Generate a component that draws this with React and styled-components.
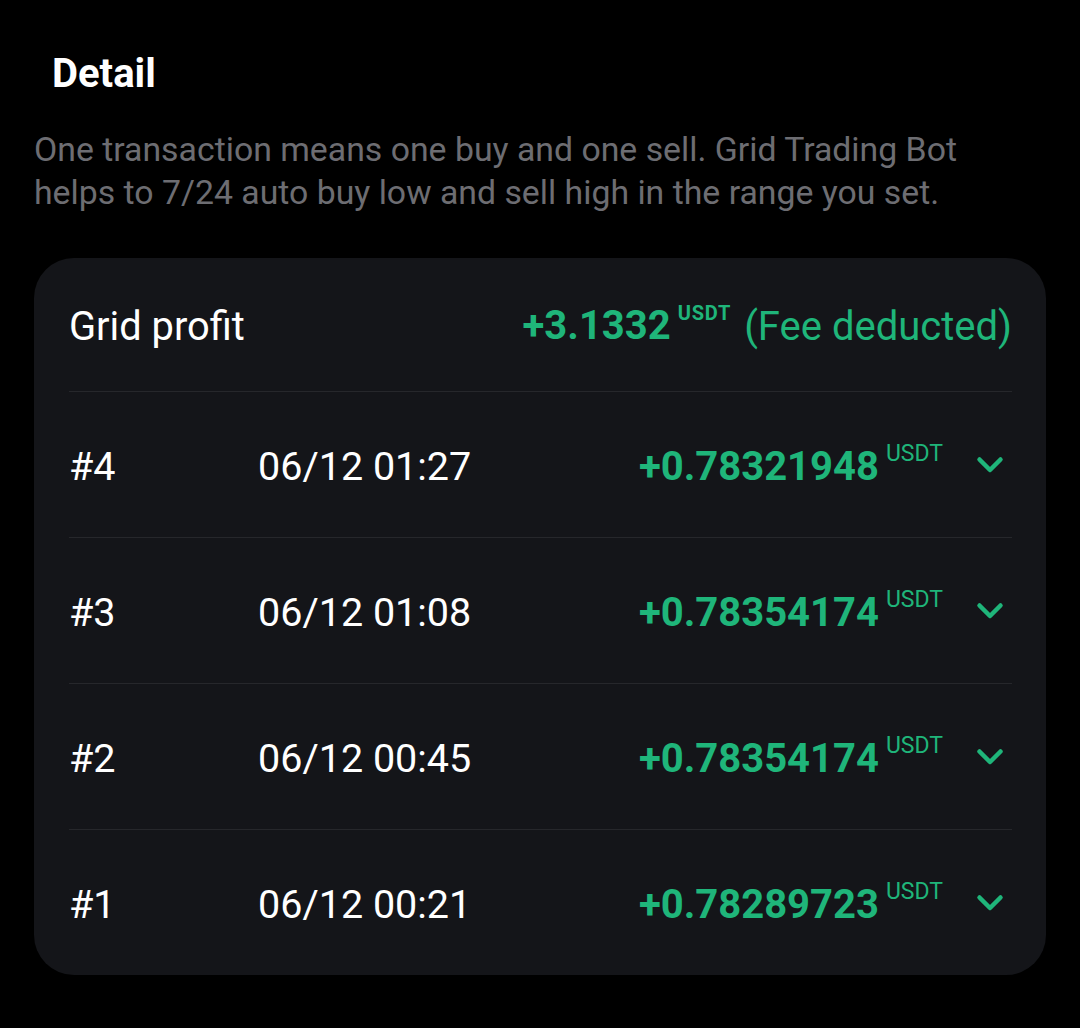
import React from "react";
import styled, { createGlobalStyle } from "styled-components";

const GlobalStyle = createGlobalStyle`
  html, body {
    margin: 0;
    padding: 0;
    background: #000000;
  }
  body {
    font-family: Roboto, "Noto Sans", "Liberation Sans", sans-serif;
    -webkit-font-smoothing: antialiased;
  }
`;

const GREEN = "#1fb57a";

const Page = styled.div`
  width: 1080px;
  height: 1028px;
  box-sizing: border-box;
  padding: 50px 34px 0 34px;
  background: #000000;
`;

const Title = styled.h1`
  margin: 0 0 0 18px;
  font-size: 40px;
  line-height: 48px;
  font-weight: 700;
  color: #ffffff;
`;

const Description = styled.p`
  margin: 30px 0 0 0;
  font-size: 33.8px;
  line-height: 43px;
  font-weight: 400;
  color: #6d6d72;
`;

const Card = styled.section`
  margin-top: 44px;
  background: #141519;
  border-radius: 40px;
  padding: 0 34px 0 35px;
  overflow: hidden;
`;

const HeaderRow = styled.div`
  height: 133px;
  display: flex;
  align-items: center;
  justify-content: space-between;
  padding-top: 3px;
  box-sizing: border-box;
`;

const Label = styled.span`
  font-size: 39.8px;
  color: #ffffff;
`;

const Summary = styled.span`
  display: flex;
  align-items: center;
`;

const TradeRow = styled.div`
  height: 146px;
  border-top: 1px solid #26272b;
  display: flex;
  align-items: center;
  padding-top: 4px;
  box-sizing: border-box;
  color: #ffffff;
  font-size: 39.5px;
`;

const Index = styled.span`
  width: 189px;
  flex-shrink: 0;
`;

const Time = styled.span`
  flex: 1;
`;

const AmountGroup = styled.span`
  display: inline-flex;
  align-items: flex-start;
  color: ${GREEN};
`;

const Amount = styled.span`
  font-size: 40px;
  line-height: 40px;
  font-weight: 700;
`;

const Unit = styled.span`
  font-size: ${({ $bold }) => ($bold ? "20px" : "23px")};
  font-weight: ${({ $bold }) => ($bold ? 700 : 400)};
  letter-spacing: ${({ $bold }) => ($bold ? "0.8px" : "0")};
  line-height: 22px;
  margin: -4px 0 0 7px;
`;

const Note = styled.span`
  font-size: 40px;
  color: ${GREEN};
  margin-left: 13px;
`;

const Chevron = styled.svg`
  width: 28px;
  height: 18px;
  margin: 0 8px 4px 33px;
  flex-shrink: 0;
`;

const trades = [
  { id: "#4", time: "06/12 01:27", amount: "+0.78321948" },
  { id: "#3", time: "06/12 01:08", amount: "+0.78354174" },
  { id: "#2", time: "06/12 00:45", amount: "+0.78354174" },
  { id: "#1", time: "06/12 00:21", amount: "+0.78289723" },
];

function App() {
  return (
    <Page>
      <GlobalStyle />
      <Title>Detail</Title>
      <Description>
        One transaction means one buy and one sell. Grid Trading Bot
        <br />
        helps to 7/24 auto buy low and sell high in the range you set.
      </Description>
      <Card>
        <HeaderRow>
          <Label>Grid profit</Label>
          <Summary>
            <AmountGroup>
              <Amount>+3.1332</Amount>
              <Unit $bold>USDT</Unit>
            </AmountGroup>
            <Note>(Fee deducted)</Note>
          </Summary>
        </HeaderRow>
        {trades.map((t) => (
          <TradeRow key={t.id}>
            <Index>{t.id}</Index>
            <Time>{t.time}</Time>
            <AmountGroup>
              <Amount>{t.amount}</Amount>
              <Unit>USDT</Unit>
            </AmountGroup>
            <Chevron viewBox="0 0 28 18" fill="none">
              <path
                d="M3.5 3.5l10.5 10.5 10.5-10.5"
                stroke={GREEN}
                strokeWidth="4.5"
                strokeLinecap="round"
                strokeLinejoin="round"
              />
            </Chevron>
          </TradeRow>
        ))}
      </Card>
    </Page>
  );
}

export default App;
